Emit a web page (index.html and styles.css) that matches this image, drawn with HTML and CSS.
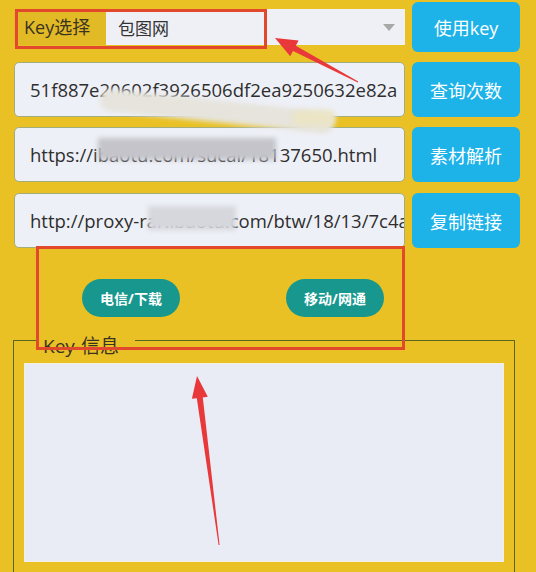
FILE: index.html
```html
<!DOCTYPE html>
<html lang="zh">
<head>
<meta charset="utf-8">
<title>Key</title>
<link rel="stylesheet" href="styles.css">
</head>
<body>
<div class="page">
  <div class="row row-first">
    <div class="selgroup">
      <span class="sellabel">Key选择</span>
      <div class="select"><span>包图网</span><i class="caret"></i></div>
    </div>
    <button class="btn">使用key</button>
  </div>
  <div class="row row-input">
    <div class="field"><span>51f887e20602f3926506df2ea9250632e82a</span></div>
    <button class="btn">查询次数</button>
  </div>
  <div class="row row-input">
    <div class="field"><span>https://ibaotu.com/sucai/18137650.html</span></div>
    <button class="btn">素材解析</button>
  </div>
  <div class="row row-input row-last">
    <div class="field"><span>http://proxy-rar.ibaotu.com/btw/18/13/7c4a</span></div>
    <button class="btn">复制链接</button>
  </div>
  <div class="pills">
    <button class="pill">电信/下载</button>
    <button class="pill">移动/网通</button>
  </div>
</div>
<fieldset class="info">
  <legend>Key-信息</legend>
  <div class="infobox"></div>
</fieldset>

<div class="marks">
  <div class="smudge s1"></div>
  <div class="smudge s2"></div>
  <div class="smudge s3"></div>
  <div class="smudge s4"></div>
  <div class="redbox b1"></div>
  <div class="redbox b2"></div>
  <svg class="arrows" width="536" height="572" viewBox="0 0 536 572">
    <polygon fill="#e8383a" points="275,38 298.6,40.4 295.8,45.7 358.2,81.6 357.8,82.4 293,50.9 290.2,56.3"/>
    <polygon fill="#e8383a" points="197,376 207.8,396.8 202.8,397.4 219.6,545 218.6,545 196.8,398.2 191.9,398.8"/>
  </svg>
</div>
</body>
</html>
```

FILE: styles.css
```css
* { box-sizing: border-box; }
html, body { margin: 0; padding: 0; }
body {
  background: #e9c124;
  font-family: "Open Sans", "Noto Sans CJK SC", sans-serif;
  color: #333;
  width: 536px;
  height: 572px;
  overflow: hidden;
  position: relative;
}
.page {
  padding: 2px 16px 0 14px;
}
.row {
  display: flex;
  gap: 7px;
}
.row-first { height: 50px; }
.row-input { height: 55px; margin-top: 10px; }
.row-last { margin-top: 11px; }
.selgroup {
  flex: 1;
  display: flex;
  align-items: center;
}
.sellabel {
  width: 92px;
  padding-left: 10px;
  font-size: 18px;
  color: #3a3322;
  align-self: center;
  height: 36px;
  line-height: 36px;
  background: #e2ba26;
}
.select {
  flex: 1;
  height: 36px;
  background: #eef0f6;
  display: flex;
  align-items: center;
  padding-left: 12px;
  font-size: 17px;
  color: #333;
  position: relative;
}
.caret {
  position: absolute;
  right: 10px;
  top: 15px;
  width: 0;
  height: 0;
  border-left: 6px solid transparent;
  border-right: 6px solid transparent;
  border-top: 7px solid #a8a8a8;
}
.btn {
  width: 108px;
  flex: none;
  border: none;
  border-radius: 6px;
  background: #1db2e8;
  color: #fff;
  font-family: "Open Sans", "Noto Sans CJK SC", sans-serif;
  font-size: 18px;
  padding: 0;
}
.field {
  flex: 1;
  min-width: 0;
  background: #eef0f7;
  border: 1px solid #a3ad7c;
  border-radius: 5px;
  display: flex;
  align-items: center;
  padding-left: 15px;
  overflow: hidden;
  white-space: nowrap;
  font-size: 18.5px;
  color: #2e2e2e;
}
.pills {
  display: flex;
  gap: 106px;
  padding-left: 68px;
  margin-top: 31px;
}
.pill {
  width: 98px;
  height: 38px;
  border: none;
  border-radius: 19px;
  background: #17978d;
  color: #fff;
  font-family: "Open Sans", "Noto Sans CJK SC", sans-serif;
  font-size: 14px;
  font-weight: bold;
  padding: 0;
}
.info {
  margin: 5px 21px 0 13px;
  border: 1px solid #56661c;
  padding: 0 10px 20px 10px;
  min-width: 0;
}
.info legend {
  margin-left: 13px;
  padding: 12px 16px 0 6px;
  font-size: 19px;
  line-height: 24px;
  color: #3a3322;
}
.infobox {
  margin-top: 5px;
  height: 199px;
  background: #eaecf5;
  border: 1px solid #f3f0e2;
}
.marks {
  position: absolute;
  left: 0;
  top: 0;
  width: 536px;
  height: 572px;
  pointer-events: none;
}
.arrows {
  position: absolute;
  left: 0;
  top: 0;
}
.redbox {
  position: absolute;
  border: 3px solid #e2482c;
}
.b1 { left: 15px; top: 9px; width: 252px; height: 40px; }
.b2 { left: 36px; top: 246px; width: 369px; height: 104px; }
.smudge {
  position: absolute;
  filter: blur(2.5px);
}
.s1 {
  left: 100px; top: 88px; width: 235px; height: 22px;
  background: #e6e4dc;
  border-radius: 12px;
  transform: rotate(6deg);
  transform-origin: left center;
}
.s2 {
  left: 98px; top: 138px; width: 178px; height: 22px;
  background: #c4c4ca;
}
.s3 {
  left: 148px; top: 206px; width: 88px; height: 24px;
  background: #d6d7dd;
}
.s4 {
  left: 292px; top: 110px; width: 44px; height: 16px;
  background: #ebe5c6;
  border-radius: 8px;
}
```
